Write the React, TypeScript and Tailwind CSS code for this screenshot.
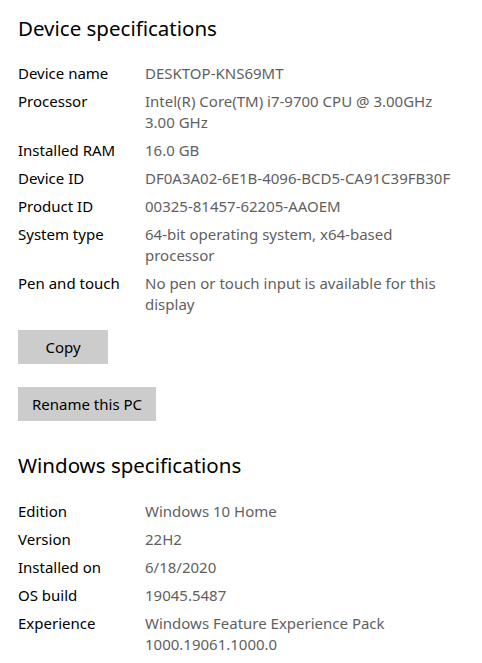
const font = { fontFamily: '"Noto Sans", "Open Sans", sans-serif' };

type Spec = { label: string; value: string[] };

const deviceSpecs: Spec[] = [
  { label: "Device name", value: ["DESKTOP-KNS69MT"] },
  { label: "Processor", value: ["Intel(R) Core(TM) i7-9700 CPU @ 3.00GHz", "3.00 GHz"] },
  { label: "Installed RAM", value: ["16.0 GB"] },
  { label: "Device ID", value: ["DF0A3A02-6E1B-4096-BCD5-CA91C39FB30F"] },
  { label: "Product ID", value: ["00325-81457-62205-AAOEM"] },
  { label: "System type", value: ["64-bit operating system, x64-based", "processor"] },
  { label: "Pen and touch", value: ["No pen or touch input is available for this", "display"] },
];

const windowsSpecs: Spec[] = [
  { label: "Edition", value: ["Windows 10 Home"] },
  { label: "Version", value: ["22H2"] },
  { label: "Installed on", value: ["6/18/2020"] },
  { label: "OS build", value: ["19045.5487"] },
  { label: "Experience", value: ["Windows Feature Experience Pack", "1000.19061.1000.0"] },
];

function SpecList({ specs }: { specs: Spec[] }) {
  return (
    <div className="flex flex-col gap-[7px]">
      {specs.map((s) => (
        <div key={s.label} className="grid grid-cols-[127px_1fr] text-[15px] leading-[21px]">
          <div className="text-black whitespace-nowrap">{s.label}</div>
          <div className="text-[#5f5f5f]">
            {s.value.map((line) => (
              <div key={line} className="whitespace-nowrap">
                {line}
              </div>
            ))}
          </div>
        </div>
      ))}
    </div>
  );
}

export default function App() {
  return (
    <div className="min-h-screen bg-white pl-[18px] pt-[13px] pb-[9px]" style={font}>
      {/* Device specifications */}
      <h2 className="text-[20.5px] leading-[30px] text-black font-normal mb-[20px]">
        Device specifications
      </h2>
      <SpecList specs={deviceSpecs} />

      <div className="flex flex-col items-start gap-[23px] mt-[15px]">
        <button className="w-[90px] h-[34px] bg-[#cccccc] text-[15px] text-black">Copy</button>
        <button className="w-[138px] h-[34px] bg-[#cccccc] text-[15px] text-black">
          Rename this PC
        </button>
      </div>

      {/* Windows specifications */}
      <h2 className="text-[20.5px] leading-[30px] text-black font-normal mt-[29px] mb-[21px]">
        Windows specifications
      </h2>
      <SpecList specs={windowsSpecs} />
    </div>
  );
}
